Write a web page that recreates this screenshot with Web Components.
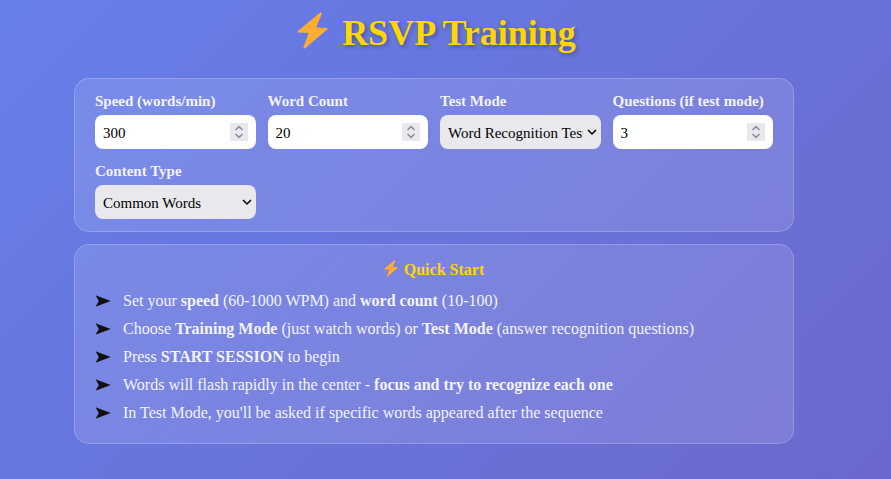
<!DOCTYPE html>
<html lang="en">
<head>
<meta charset="utf-8">
<meta name="viewport" content="width=device-width, initial-scale=1">
<title>RSVP Training</title>
<style>
  body {
    margin: 0;
    min-height: 100vh;
    background: linear-gradient(135deg, #667eea, #6b69cd);
    color: #f3f3ff;
    font: 15px/20px "Liberation Serif", serif;
  }
</style>
</head>
<body>
<rsvp-app></rsvp-app>

<script>
// Lightning bolt, sized by --bolt-width / --bolt-height
class BoltIcon extends HTMLElement {
  constructor() {
    super()
    this.attachShadow({ mode: 'open' }).innerHTML = `
      <style>
        :host { display: block; flex: none; }
        svg { display: block; width: var(--bolt-width, 14px); height: var(--bolt-height, 17px); }
      </style>
      <svg viewBox="0 0 30 36" aria-hidden="true">
        <path d="M22.5 .5 L.8 18.6 Q-.3 19.7 1.2 19.9 L11.3 20.5 L6.2 34.2 Q6 36.3 7.8 35.3 L29.3 17.1 Q30.4 15.8 28.8 15.5 L18.6 15 L24.1 1.8 Q24.1 -.4 22.5 .5Z" fill="#ffac33"/>
      </svg>
    `
  }
}
customElements.define('bolt-icon', BoltIcon)


class GlassPanel extends HTMLElement {
  constructor() {
    super()
    this.attachShadow({ mode: 'open' }).innerHTML = `
      <style>
        :host {
          display: block;
          box-sizing: border-box;
          padding: 12px 20px;
          border: 1px solid rgba(255, 255, 255, .2);
          border-radius: 15px;
          background: rgba(255, 255, 255, .12);
        }
      </style>
      <slot></slot>
    `
  }
}
customElements.define('glass-panel', GlassPanel)


class NumberField extends HTMLElement {
  constructor() {
    super()
    this.attachShadow({ mode: 'open' }).innerHTML = `
      <style>
        :host { display: flex; flex-direction: column; gap: 4px; min-width: 0; }
        label { font-weight: bold; white-space: nowrap; }
        .box {
          display: flex;
          align-items: center;
          height: 34px;
          box-sizing: border-box;
          padding: 0 8px;
          border-radius: 8px;
          background: #fff;
        }
        input {
          flex: 1;
          min-width: 0;
          height: 34px;
          box-sizing: border-box;
          padding: 2px 0 0;
          border: 0;
          outline: 0;
          background: none;
          color: #000;
          font: inherit;
          appearance: textfield;
        }
        input::-webkit-inner-spin-button { appearance: none; margin: 0; }
        .spin { display: flex; flex-direction: column; width: 18px; background: #e9e9ed; }
        button { display: block; height: 9px; padding: 0; border: 0; background: none; }
        svg { display: block; margin: 0 auto; }
        path { fill: none; stroke: #8f8f9d; stroke-width: 1.7; stroke-linecap: round; stroke-linejoin: round; }
      </style>
      <label for="field"></label>
      <div class="box">
        <input id="field" type="number">
        <div class="spin">
          <button class="up" type="button" aria-label="Increase">
            <svg width="10" height="9" viewBox="0 0 10 9"><path d="M2 6.5 L5 3.7 L8 6.5"/></svg>
          </button>
          <button class="down" type="button" aria-label="Decrease">
            <svg width="10" height="9" viewBox="0 0 10 9"><path d="M2 2.5 L5 5.3 L8 2.5"/></svg>
          </button>
        </div>
      </div>
    `
    this._input = this.shadowRoot.querySelector('input')
    this.shadowRoot.querySelector('.up').addEventListener('click', () => this._input.stepUp())
    this.shadowRoot.querySelector('.down').addEventListener('click', () => this._input.stepDown())
  }

  connectedCallback() {
    this.shadowRoot.querySelector('label').textContent = this.getAttribute('label')
    this._input.min = this.getAttribute('min')
    this._input.max = this.getAttribute('max')
    this._input.value = this.getAttribute('value')
  }
}
customElements.define('number-field', NumberField)


class SelectField extends HTMLElement {
  constructor() {
    super()
    this.attachShadow({ mode: 'open' }).innerHTML = `
      <style>
        :host { display: flex; flex-direction: column; gap: 4px; min-width: 0; }
        label { font-weight: bold; white-space: nowrap; }
        .box { display: grid; align-items: center; }
        .box > * { grid-area: 1 / 1; }
        select {
          width: 100%;
          min-width: 0;
          height: 34px;
          box-sizing: border-box;
          padding: 2px 18px 0 8px;
          border: 0;
          border-radius: 8px;
          background: #e9e9ed;
          color: #000;
          font: inherit;
          appearance: none;
        }
        svg { justify-self: end; margin-right: 4px; pointer-events: none; }
      </style>
      <label for="field"></label>
      <div class="box">
        <select id="field"></select>
        <svg width="10" height="8" viewBox="0 0 10 8" aria-hidden="true">
          <path d="M1.5 2.5 L5 6 L8.5 2.5" fill="none" stroke="#111" stroke-width="1.7" stroke-linecap="round" stroke-linejoin="round"/>
        </svg>
      </div>
    `
  }

  connectedCallback() {
    this.shadowRoot.querySelector('label').textContent = this.getAttribute('label')
    const option = document.createElement('option')
    option.textContent = this.getAttribute('value')
    this.shadowRoot.querySelector('select').append(option)
  }
}
customElements.define('select-field', SelectField)


class TipItem extends HTMLElement {
  constructor() {
    super()
    this.attachShadow({ mode: 'open' }).innerHTML = `
      <style>
        :host { display: flex; align-items: center; gap: 12px; line-height: 28px; }
        svg { flex: none; }
      </style>
      <svg width="16" height="12" viewBox="0 0 16 12" aria-hidden="true">
        <path d="M.5 .3 L15.7 6 L.5 11.7 L3.8 6Z" fill="#111"/>
      </svg>
      <div><slot></slot></div>
    `
    this.setAttribute('role', 'listitem')
  }
}
customElements.define('tip-item', TipItem)


class RsvpApp extends HTMLElement {
  constructor() {
    super()
    this.attachShadow({ mode: 'open' }).innerHTML = `
      <style>
        :host { display: block; padding: 12px 23px 12px 0; }
        main {
          display: flex;
          flex-direction: column;
          gap: 12px;
          max-width: 720px;
          margin: 0 auto;
        }
        h1, h2 { display: flex; justify-content: center; margin: 0; color: #ffd700; }
        h1 {
          --bolt-width: 31px;
          --bolt-height: 37px;
          gap: 14px;
          margin-bottom: 12px;
          padding-left: 5px;
          font-size: 36px;
          line-height: 42px;
          text-shadow: 2px 2px 4px rgba(0, 0, 0, .3);
        }
        h2 {
          gap: 6px;
          margin: 3px 0 7px;
          font-size: 16px;
          line-height: 20px;
        }
        .fields { display: grid; grid-template-columns: repeat(auto-fit, minmax(150px, 1fr)); gap: 12px; }
        .tips { padding-bottom: 4px; font-size: 16px; }
      </style>
      <main>
        <h1><bolt-icon></bolt-icon><span>RSVP Training</span></h1>
        <glass-panel>
          <div class="fields">
            <number-field label="Speed (words/min)" value="300" min="60" max="1000"></number-field>
            <number-field label="Word Count" value="20" min="10" max="100"></number-field>
            <select-field label="Test Mode" value="Word Recognition Test"></select-field>
            <number-field label="Questions (if test mode)" value="3" min="1" max="10"></number-field>
            <select-field label="Content Type" value="Common Words"></select-field>
          </div>
        </glass-panel>
        <glass-panel>
          <h2><bolt-icon></bolt-icon><span>Quick Start</span></h2>
          <div class="tips" role="list">
            <tip-item>Set your <strong>speed</strong> (60-1000 WPM) and <strong>word count</strong> (10-100)</tip-item>
            <tip-item>Choose <strong>Training Mode</strong> (just watch words) or <strong>Test Mode</strong> (answer recognition questions)</tip-item>
            <tip-item>Press <strong>START SESSION</strong> to begin</tip-item>
            <tip-item>Words will flash rapidly in the center - <strong>focus and try to recognize each one</strong></tip-item>
            <tip-item>In Test Mode, you'll be asked if specific words appeared after the sequence</tip-item>
          </div>
        </glass-panel>
      </main>
    `
  }
}
customElements.define('rsvp-app', RsvpApp)
</script>
</body>
</html>
